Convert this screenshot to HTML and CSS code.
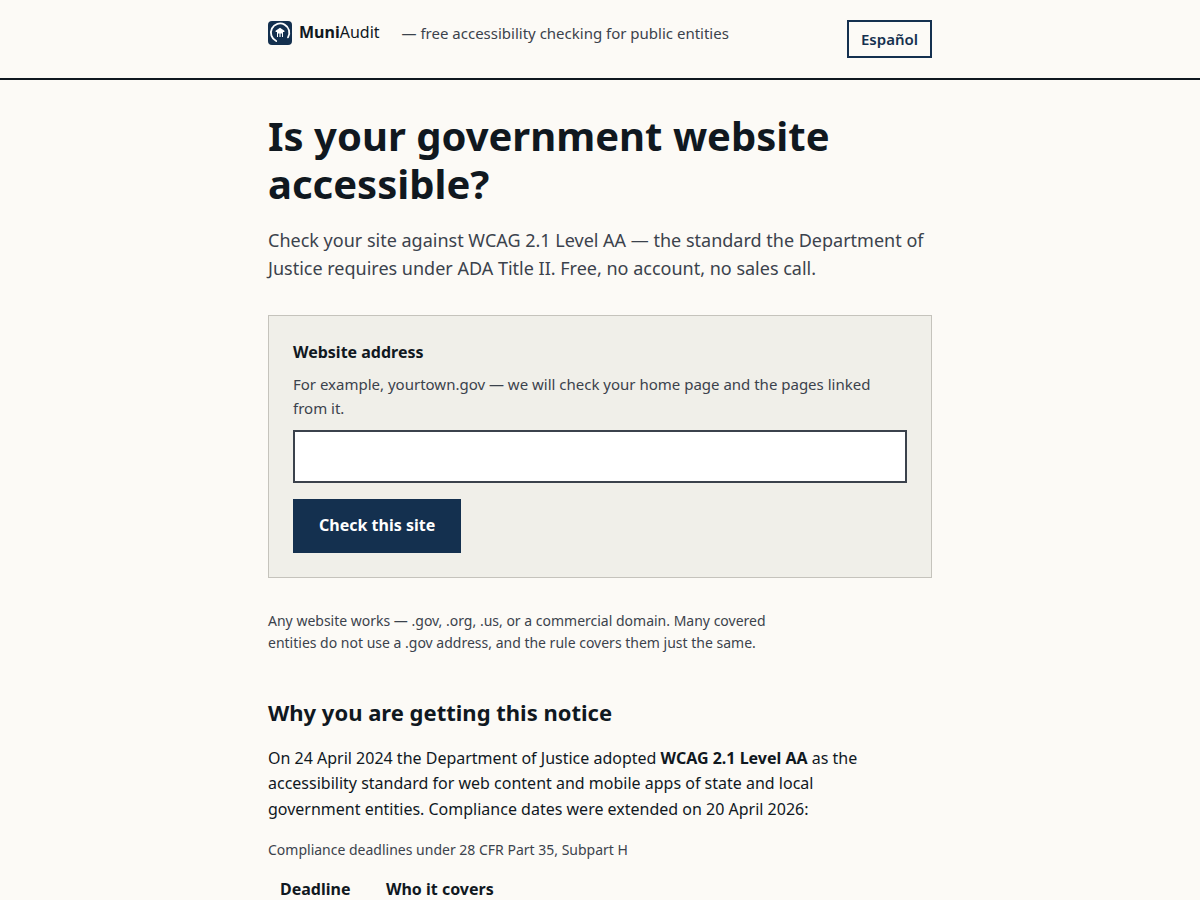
FILE: index.html
```
<!DOCTYPE html>
<html lang="en">
<head>
    <meta charset="UTF-8">
    <meta name="viewport" content="width=device-width, initial-scale=1">
    <title>MuniAudit</title>
    <link rel="stylesheet" href="styles.css">
</head>
<body>
<header class="site-header">
    <div class="wrap header-row">
        <div class="header-brand">
            <a class="brand" href="#">
                <svg class="brand-mark" viewBox="0 0 24 24" aria-hidden="true">
                    <rect width="24" height="24" rx="4" fill="#14304f"/>
                    <path d="M8.2 20A9.2 9.2 0 1 1 20 16.4" fill="none" stroke="#fff" stroke-width="1.8" stroke-linecap="round"/>
                    <path d="M12 6.8L16.4 9.8V11H7.6V9.8Z" fill="#fff"/>
                    <path d="M9 11H15V16H9Z" fill="#fff"/>
                    <path d="M10 12.6H11.4V16H10ZM12.6 12.6H14V16H12.6Z" fill="#14304f"/>
                </svg>
                <span class="brand-name"><strong>Muni</strong>Audit</span>
            </a>
            <span class="tagline">— free accessibility checking for public entities</span>
        </div>
        <a class="lang-link" href="#" lang="es">Español</a>
    </div>
</header>

<main class="wrap main">
    <h1>Is your government website accessible?</h1>
    <p class="lead">Check your site against WCAG 2.1 Level AA — the standard the Department of Justice requires under ADA Title II. Free, no account, no sales call.</p>

    <form class="check-form">
        <label for="url">Website address</label>
        <p class="hint" id="url-hint">For example, yourtown.gov — we will check your home page and the pages linked from it.</p>
        <input type="text" id="url" name="url" aria-describedby="url-hint">
        <button type="submit">Check this site</button>
    </form>

    <p class="note">Any website works — .gov, .org, .us, or a commercial domain. Many covered entities do not use a .gov address, and the rule covers them just the same.</p>

    <h2>Why you are getting this notice</h2>
    <p>On 24 April 2024 the Department of Justice adopted <strong>WCAG 2.1 Level AA</strong> as the accessibility standard for web content and mobile apps of state and local government entities. Compliance dates were extended on 20 April 2026:</p>

    <table class="deadlines">
        <caption>Compliance deadlines under 28 CFR Part 35, Subpart H</caption>
        <thead>
            <tr>
                <th class="col-date" scope="col">Deadline</th>
                <th scope="col">Who it covers</th>
            </tr>
        </thead>
    </table>
</main>
</body>
</html>
```

FILE: styles.css
```
*{
    box-sizing: border-box;
}
body{
    margin: 0;
    font-family: "Noto Sans", sans-serif;
    font-size: 16px;
    line-height: 1.6;
    color: #10181f;
    background-color: #fcfaf6;
}
.wrap{
    max-width: 712px;
    margin: 0 auto;
    padding: 0 24px;
}

/* header */
.site-header{
    padding: 20px 0;
    border-bottom: 2px solid #10181f;
}
.header-row{
    display: flex;
    justify-content: space-between;
    align-items: flex-start;
    gap: 16px;
}
.header-brand{
    display: flex;
    flex-wrap: wrap;
    align-items: center;
    column-gap: 22px;
}
.brand{
    display: flex;
    align-items: center;
    gap: 7px;
    color: inherit;
    text-decoration: none;
}
.brand-mark{
    width: 24px;
    height: 24px;
}
.tagline{
    font-size: 15px;
    color: #3b424c;
}
.lang-link{
    padding: 5px 12px;
    border: 2px solid #14304f;
    font-size: 15px;
    font-weight: 600;
    color: #14304f;
    text-decoration: none;
}

/* content */
.main{
    padding-top: 32px;
    padding-bottom: 48px;
}
h1{
    margin: 0 0 18px;
    font-size: 40px;
    line-height: 48px;
}
h2{
    margin: 40px 0 16px;
    font-size: 22px;
}
p{
    max-width: 66ch;
    margin: 0 0 16px;
}
.lead{
    max-width: none;
    margin-bottom: 33px;
    font-size: 18px;
    line-height: 28px;
    color: #3b424c;
}

.check-form{
    margin-bottom: 32px;
    padding: 24px;
    border: 1px solid #c5c3bc;
    background-color: #f0efe9;
}
.check-form label{
    display: block;
    margin-bottom: 6px;
    font-weight: bold;
}
.hint{
    max-width: none;
    margin-bottom: 10px;
    font-size: 15px;
    color: #3b424c;
}
.check-form input{
    display: block;
    width: 100%;
    margin-bottom: 16px;
    padding: 12px;
    border: 2px solid #3b424c;
    border-radius: 0;
    font: inherit;
    background-color: #fff;
}
.check-form button{
    display: block;
    padding: 12px 24px;
    border: 2px solid #14304f;
    border-radius: 0;
    font: inherit;
    font-weight: bold;
    color: #fff;
    background-color: #14304f;
    cursor: pointer;
}
.note{
    font-size: 14px;
    color: #3b424c;
}

/* deadlines table */
.deadlines{
    border-collapse: collapse;
}
.deadlines caption{
    padding-bottom: 8px;
    font-size: 14px;
    text-align: left;
    white-space: nowrap;
    color: #3b424c;
}
.deadlines th{
    padding: 8px 12px;
    text-align: left;
}
.col-date{
    width: 106px;
}
```
